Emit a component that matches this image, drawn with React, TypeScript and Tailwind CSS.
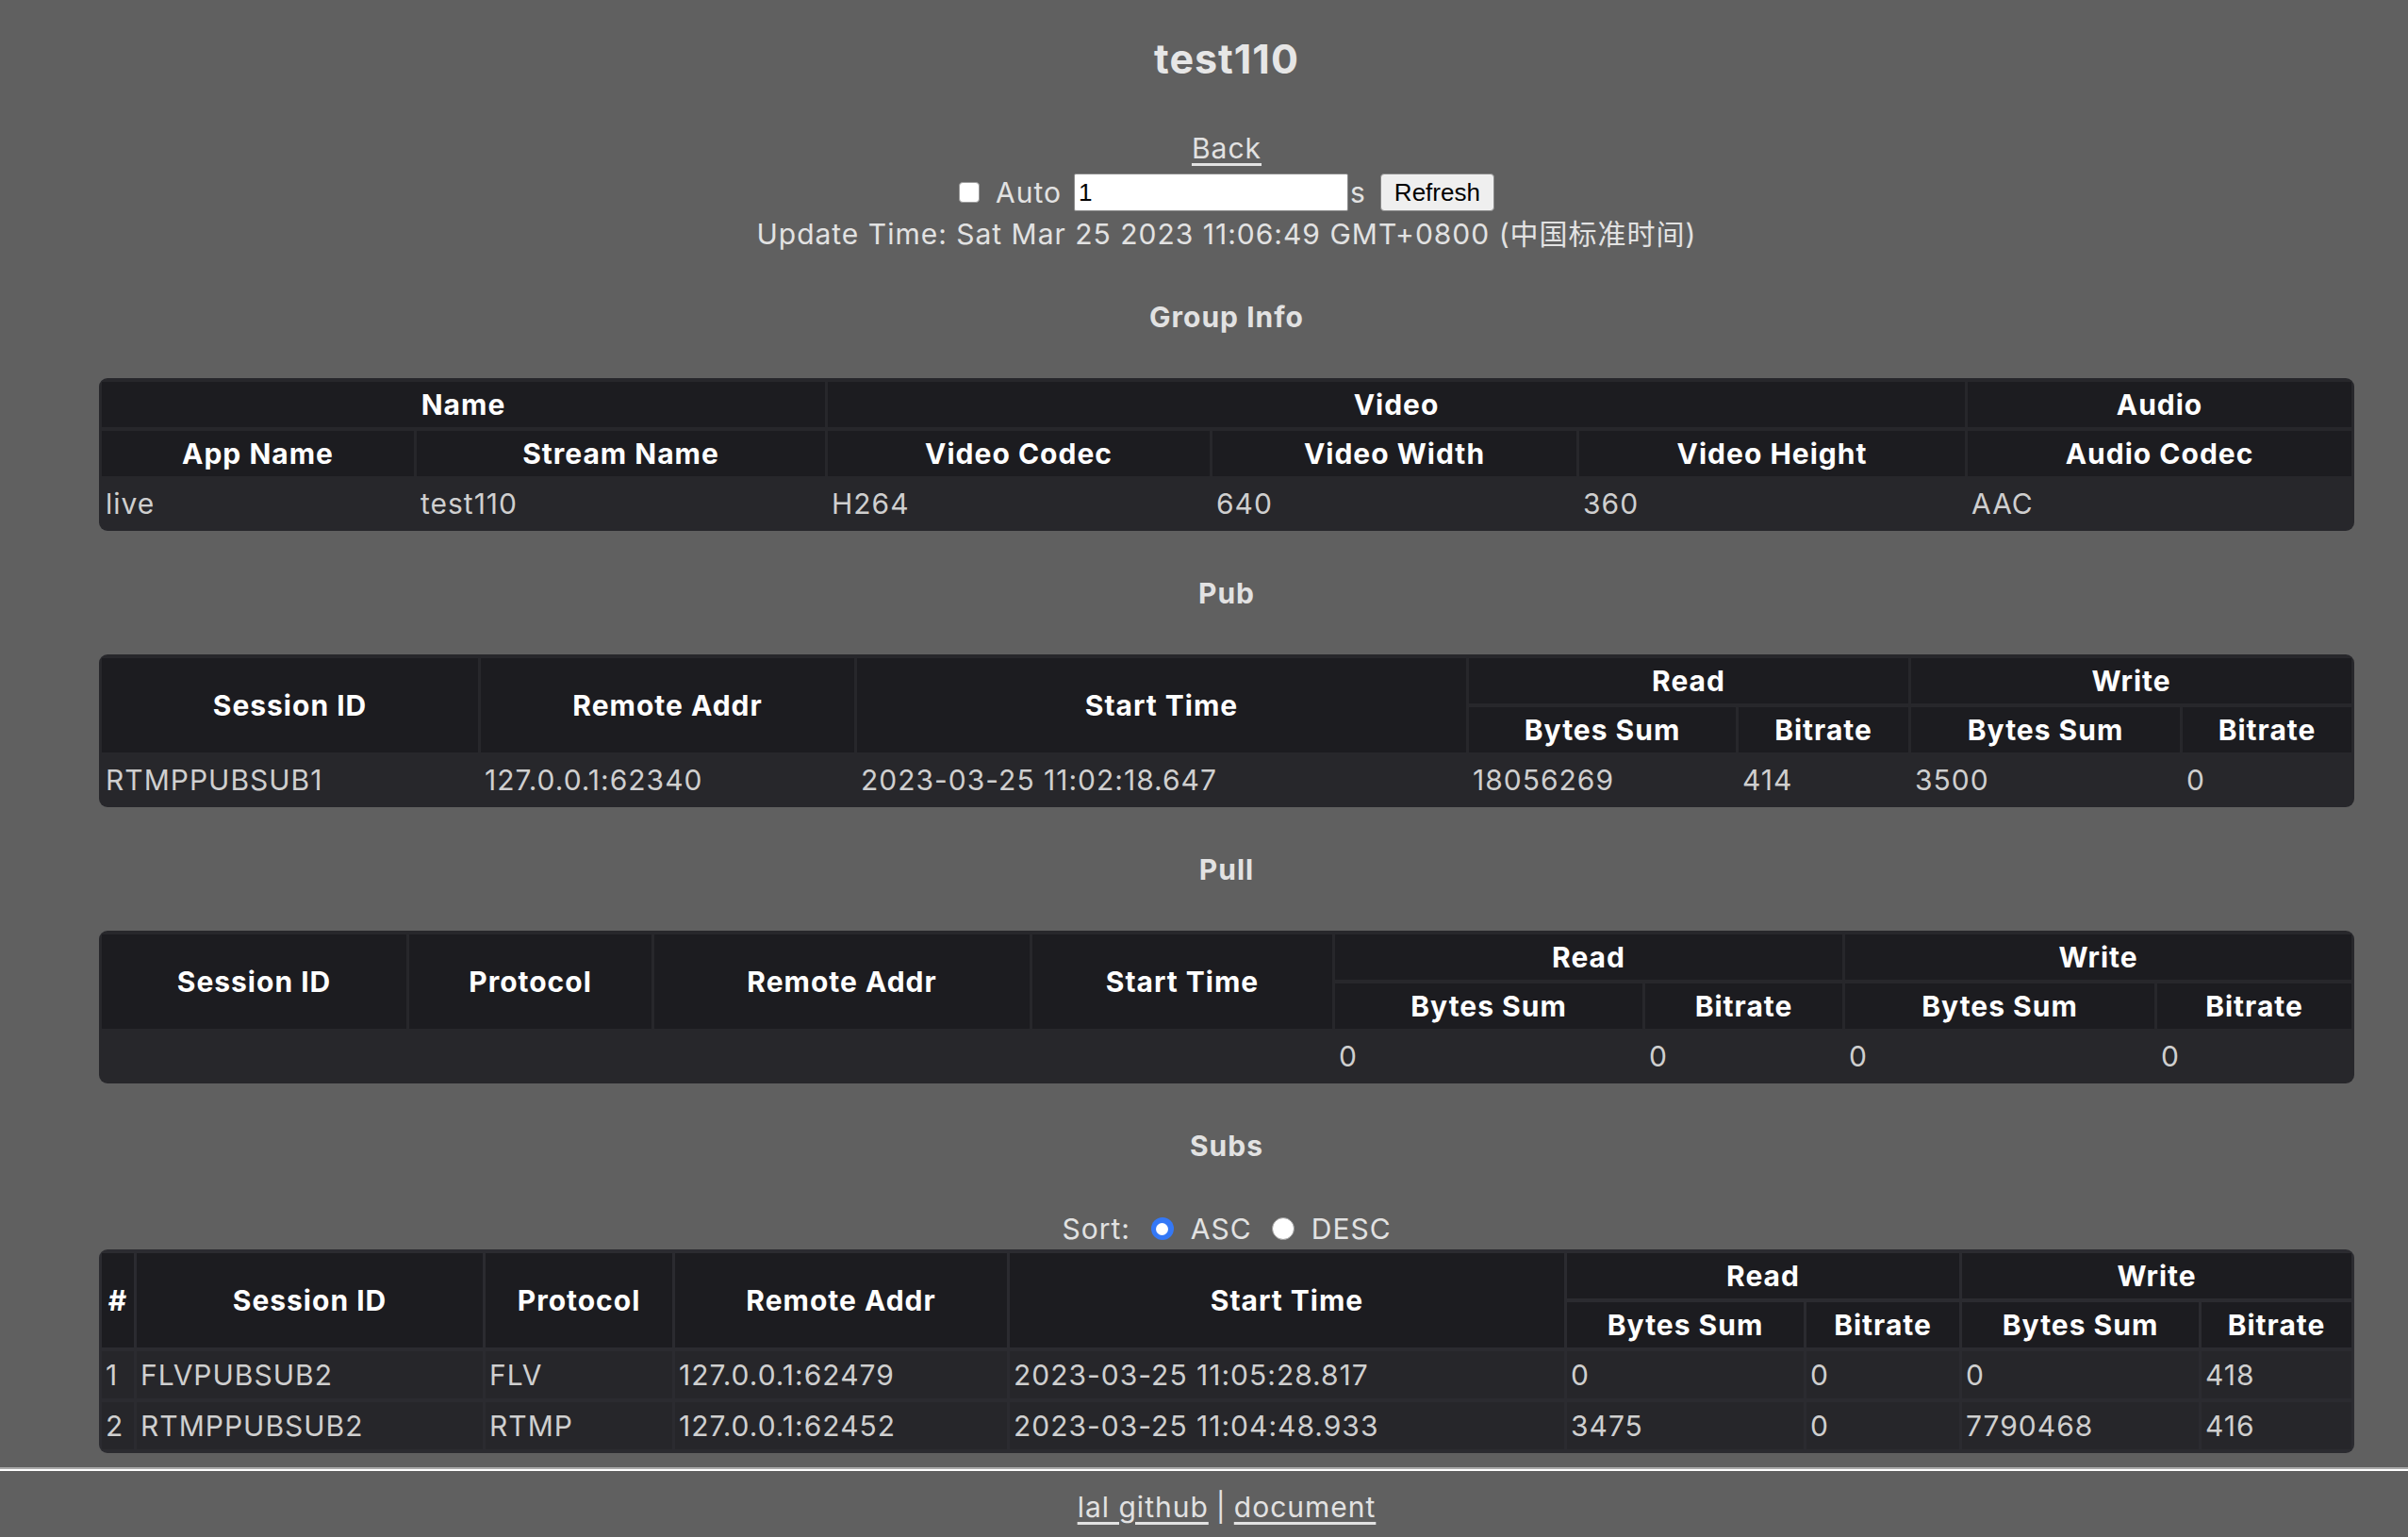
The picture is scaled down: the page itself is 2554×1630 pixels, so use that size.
import React from "react";

const TH = "bg-[#1c1c20] text-white font-bold text-center px-1 h-[48px] leading-[36px] whitespace-nowrap";
const TD = "text-[#cfcfcf] text-left px-1 h-[50px] leading-[36px] whitespace-nowrap font-normal";

function Section({ title }: { title: string }) {
  return <div className="h-[40px] mt-[46px] flex items-center font-bold text-[#e2e2e2]">{title}</div>;
}

function Table({ cols, lined, children }: { cols: string[]; lined?: boolean; children: React.ReactNode }) {
  return (
    <div className={lined ? "w-[2392px] rounded-[9px] overflow-hidden bg-[#2b2b30] mt-[45px]" : "w-[2392px] rounded-[9px] overflow-hidden bg-[#27272b] mt-[45px]"}>
      <table className="w-full table-fixed border-separate border-spacing-x-[3px] border-spacing-y-[4px]">
        <colgroup>
          {cols.map((c, i) => (
            <col key={i} className={c} />
          ))}
        </colgroup>
        {children}
      </table>
    </div>
  );
}

export default function App() {
  return (
    <div className="min-h-[1630px] bg-[#606060] text-[30px] tracking-[1px] text-[#e2e2e2] font-[Inter,'Noto_Sans_CJK_SC',sans-serif] flex flex-col">
      <div className="pl-[48px] flex flex-col items-center">
        <h2 className="mt-[38px] h-[48px] flex items-center text-[43px] font-bold text-[#e6e6e6]">test110</h2>

        <a href="#" className="mt-[51px] h-[40px] flex items-center underline underline-offset-[5px] text-[#e2e2e2]">
          Back
        </a>

        <div className="mt-[5px] h-[44px] flex items-center">
          <input type="checkbox" className="appearance-none w-[22px] h-[22px] bg-white rounded-[4px] border border-[#9a9a9a] mr-[17px]" />
          <span>Auto</span>
          <input
            type="text"
            defaultValue="1"
            className="ml-[13px] w-[291px] h-[40px] bg-white text-black text-[26px] tracking-normal px-[4px] border border-[#8a8a8a] rounded-[2px] font-['Liberation_Sans',sans-serif]"
          />
          <span className="ml-[2px]">s</span>
          <button className="ml-[15px] w-[121px] h-[40px] bg-[#efefef] text-black text-[26px] tracking-normal border border-[#8a8a8a] rounded-[4px] font-['Liberation_Sans',sans-serif]">
            Refresh
          </button>
        </div>

        <div className="mt-[2px] h-[40px] flex items-center">Update Time: Sat Mar 25 2023 11:06:49 GMT+0800 (中国标准时间)</div>

        <div className="h-[40px] mt-[48px] flex items-center font-bold text-[#e2e2e2]">Group Info</div>
        <Table cols={["w-[331px]", "w-[433px]", "w-[405px]", "w-[386px]", "w-[409px]", "w-[407px]"]}>
          <thead>
            <tr>
              <th colSpan={2} className={TH}>Name</th>
              <th colSpan={3} className={TH}>Video</th>
              <th className={TH}>Audio</th>
            </tr>
            <tr>
              <th className={TH}>App Name</th>
              <th className={TH}>Stream Name</th>
              <th className={TH}>Video Codec</th>
              <th className={TH}>Video Width</th>
              <th className={TH}>Video Height</th>
              <th className={TH}>Audio Codec</th>
            </tr>
          </thead>
          <tbody>
            <tr>
              {["live", "test110", "H264", "640", "360", "AAC"].map((v, i) => (
                <td key={i} className={TD}>{v}</td>
              ))}
            </tr>
          </tbody>
        </Table>

        <Section title="Pub" />
        <Table cols={["w-[399px]", "w-[396px]", "w-[646px]", "w-[283px]", "w-[180px]", "w-[285px]", "w-[179px]"]}>
          <thead>
            <tr>
              <th rowSpan={2} className={TH}>Session ID</th>
              <th rowSpan={2} className={TH}>Remote Addr</th>
              <th rowSpan={2} className={TH}>Start Time</th>
              <th colSpan={2} className={TH}>Read</th>
              <th colSpan={2} className={TH}>Write</th>
            </tr>
            <tr>
              <th className={TH}>Bytes Sum</th>
              <th className={TH}>Bitrate</th>
              <th className={TH}>Bytes Sum</th>
              <th className={TH}>Bitrate</th>
            </tr>
          </thead>
          <tbody>
            <tr>
              {["RTMPPUBSUB1", "127.0.0.1:62340", "2023-03-25 11:02:18.647", "18056269", "414", "3500", "0"].map((v, i) => (
                <td key={i} className={TD}>{v}</td>
              ))}
            </tr>
          </tbody>
        </Table>

        <Section title="Pull" />
        <Table cols={["w-[323px]", "w-[257px]", "w-[398px]", "w-[318px]", "w-[326px]", "w-[209px]", "w-[328px]", "w-[206px]"]}>
          <thead>
            <tr>
              <th rowSpan={2} className={TH}>Session ID</th>
              <th rowSpan={2} className={TH}>Protocol</th>
              <th rowSpan={2} className={TH}>Remote Addr</th>
              <th rowSpan={2} className={TH}>Start Time</th>
              <th colSpan={2} className={TH}>Read</th>
              <th colSpan={2} className={TH}>Write</th>
            </tr>
            <tr>
              <th className={TH}>Bytes Sum</th>
              <th className={TH}>Bitrate</th>
              <th className={TH}>Bytes Sum</th>
              <th className={TH}>Bitrate</th>
            </tr>
          </thead>
          <tbody>
            <tr>
              {["", "", "", "", "0", "0", "0", "0"].map((v, i) => (
                <td key={i} className={TD}>{v}</td>
              ))}
            </tr>
          </tbody>
        </Table>

        <Section title="Subs" />
        <div className="mt-[48px] h-[40px] flex items-center">
          <span>Sort:</span>
          <span className="ml-[22px] w-[24px] h-[24px] rounded-full bg-[#3478f6] flex items-center justify-center">
            <span className="w-[13px] h-[13px] rounded-full bg-white" />
          </span>
          <span className="ml-[18px]">ASC</span>
          <span className="ml-[21px] w-[24px] h-[24px] rounded-full bg-white border border-[#9a9a9a]" />
          <span className="ml-[18px]">DESC</span>
        </div>
        <div className="-mt-[43px]" />
        <Table
          lined
          cols={["w-[34px]", "w-[367px]", "w-[198px]", "w-[352px]", "w-[588px]", "w-[251px]", "w-[162px]", "w-[251px]", "w-[159px]"]}
        >
          <thead>
            <tr>
              <th rowSpan={2} className={TH}>#</th>
              <th rowSpan={2} className={TH}>Session ID</th>
              <th rowSpan={2} className={TH}>Protocol</th>
              <th rowSpan={2} className={TH}>Remote Addr</th>
              <th rowSpan={2} className={TH}>Start Time</th>
              <th colSpan={2} className={TH}>Read</th>
              <th colSpan={2} className={TH}>Write</th>
            </tr>
            <tr>
              <th className={TH}>Bytes Sum</th>
              <th className={TH}>Bitrate</th>
              <th className={TH}>Bytes Sum</th>
              <th className={TH}>Bitrate</th>
            </tr>
          </thead>
          <tbody>
            {[
              ["1", "FLVPUBSUB2", "FLV", "127.0.0.1:62479", "2023-03-25 11:05:28.817", "0", "0", "0", "418"],
              ["2", "RTMPPUBSUB2", "RTMP", "127.0.0.1:62452", "2023-03-25 11:04:48.933", "3475", "0", "7790468", "416"],
            ].map((row, r) => (
              <tr key={r}>
                {row.map((v, i) => (
                  <td key={i} className={TD + " bg-[#26262a]"}>{v}</td>
                ))}
              </tr>
            ))}
          </tbody>
        </Table>
      </div>

      <div className="mt-[15px] h-[2px] bg-[#a9a9a9]" />
      <div className="h-[2px] bg-white" />
      <div className="pl-[48px] mt-[18px] h-[40px] flex items-center justify-center text-[#e2e2e2]">
        <a href="#" className="underline underline-offset-[5px]">lal github</a>
        <span className="mx-[8px]">|</span>
        <a href="#" className="underline underline-offset-[5px]">document</a>
      </div>
    </div>
  );
}
